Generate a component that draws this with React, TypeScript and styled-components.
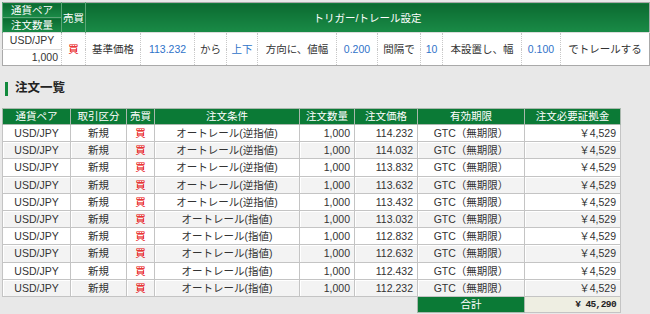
import { createGlobalStyle } from "styled-components";
import styled from "styled-components";

const GlobalStyle = createGlobalStyle`
  html, body {
    margin: 0;
    padding: 0;
    background: #e8e8e8;
  }
  body {
    font-family: "Liberation Sans", "Noto Sans CJK JP", sans-serif;
    font-size: 10.5px;
    color: #333;
  }
`;

const Page = styled.div`
  padding: 2px 0 0 2px;
  width: 648px;
`;

const TriggerTable = styled.table`
  width: 647px;
  table-layout: fixed;
  border-collapse: collapse;
  border: 1px solid #a9a9a9;
  background: #fff;
`;

const GreenHead = styled.th<{ $split?: boolean }>`
  background: linear-gradient(#0b6a30, #1a8b47);
  color: #fff;
  font-weight: normal;
  height: 14px;
  padding: 0;
  border-left: 1px solid #5aa676;
  border-bottom: ${(p) => (p.$split ? "1px solid #5aa676" : "none")};
  text-align: center;
  line-height: 14px;
  white-space: nowrap;
`;

const TriggerCell = styled.td<{ $blue?: boolean; $red?: boolean; $align?: string }>`
  height: 15.5px;
  padding: 0 3px;
  text-align: ${(p) => p.$align || "center"};
  color: ${(p) => (p.$red ? "#e60000" : p.$blue ? "#2f73c9" : "#333")};
  border-left: 1px dotted #c8c8c8;
  border-top: 1px solid #dcdcdc;
  white-space: nowrap;
  line-height: 15px;
`;

const SectionTitle = styled.h2`
  display: flex;
  align-items: center;
  gap: 7px;
  margin: 15px 0 12px 3px;
  font-size: 12.5px;
  font-weight: bold;
  color: #222;
  line-height: 15px;

  &::before {
    content: "";
    width: 3px;
    height: 14px;
    background: #138a3e;
  }
`;

const OrderTable = styled.table`
  width: 619px;
  table-layout: fixed;
  border-collapse: collapse;
`;

const OrderHead = styled.th`
  background: #0b7a36;
  color: #fff;
  font-weight: normal;
  height: 15px;
  padding: 0;
  border: 1px solid #a9b8ad;
  line-height: 15px;
  text-align: center;
  white-space: nowrap;
`;

const OrderRow = styled.tr<{ $odd: boolean }>`
  background: ${(p) => (p.$odd ? "#fff" : "#f3f3f3")};
`;

const OrderCell = styled.td<{ $align?: string; $red?: boolean }>`
  height: 16.2px;
  padding: 0 4px;
  border: 1px solid #c4c4c4;
  box-shadow: inset 1px 1px 0 #fff;
  text-align: ${(p) => p.$align || "center"};
  color: ${(p) => (p.$red ? "#e60000" : "#333")};
  white-space: nowrap;
  line-height: 16px;
`;

const BlankCell = styled.td`
  border: none;
  background: #e8e8e8;
`;

const TotalLabel = styled.td`
  background: #0b7a36;
  color: #fff;
  text-align: center;
  height: 15px;
  border: 1px solid #a9b8ad;
  line-height: 15px;
  padding: 0;
`;

const TotalValue = styled.td`
  background: #eeeee2;
  border: 1px solid #c4c4c4;
  text-align: right;
  padding: 0 4px;
  font-family: "Liberation Mono", "DejaVu Sans Mono", monospace;
  font-weight: bold;
  font-size: 9.5px;
  letter-spacing: -0.6px;
  color: #222;
`;

const triggerCols = [59, 24, 55, 54, 32, 31, 79, 41, 43, 22, 79, 39, 89];
const orderCols = [68, 56, 28, 145, 55, 63, 107, 96];

const orders = [
  { kind: "オートレール(逆指値)", price: "114.232" },
  { kind: "オートレール(逆指値)", price: "114.032" },
  { kind: "オートレール(逆指値)", price: "113.832" },
  { kind: "オートレール(逆指値)", price: "113.632" },
  { kind: "オートレール(逆指値)", price: "113.432" },
  { kind: "オートレール(指値)", price: "113.032" },
  { kind: "オートレール(指値)", price: "112.832" },
  { kind: "オートレール(指値)", price: "112.632" },
  { kind: "オートレール(指値)", price: "112.432" },
  { kind: "オートレール(指値)", price: "112.232" },
];

const App = () => {
  return (
    <>
      <GlobalStyle />
      <Page>
        <TriggerTable>
          <colgroup>
            {triggerCols.map((w, i) => (
              <col key={i} style={{ width: w }} />
            ))}
          </colgroup>
          <thead>
            <tr>
              <GreenHead $split>通貨ペア</GreenHead>
              <GreenHead rowSpan={2}>売買</GreenHead>
              <GreenHead rowSpan={2} colSpan={11}>
                トリガー/トレール設定
              </GreenHead>
            </tr>
            <tr>
              <GreenHead>注文数量</GreenHead>
            </tr>
          </thead>
          <tbody>
            <tr>
              <TriggerCell>USD/JPY</TriggerCell>
              <TriggerCell rowSpan={2} $red>
                買
              </TriggerCell>
              <TriggerCell rowSpan={2}>基準価格</TriggerCell>
              <TriggerCell rowSpan={2} $blue>
                113.232
              </TriggerCell>
              <TriggerCell rowSpan={2}>から</TriggerCell>
              <TriggerCell rowSpan={2} $blue>
                上下
              </TriggerCell>
              <TriggerCell rowSpan={2}>方向に、値幅</TriggerCell>
              <TriggerCell rowSpan={2} $blue>
                0.200
              </TriggerCell>
              <TriggerCell rowSpan={2}>間隔で</TriggerCell>
              <TriggerCell rowSpan={2} $blue>
                10
              </TriggerCell>
              <TriggerCell rowSpan={2}>本設置し、幅</TriggerCell>
              <TriggerCell rowSpan={2} $blue>
                0.100
              </TriggerCell>
              <TriggerCell rowSpan={2}>でトレールする</TriggerCell>
            </tr>
            <tr>
              <TriggerCell $align="right">1,000</TriggerCell>
            </tr>
          </tbody>
        </TriggerTable>

        <SectionTitle>注文一覧</SectionTitle>

        <OrderTable>
          <colgroup>
            {orderCols.map((w, i) => (
              <col key={i} style={{ width: w }} />
            ))}
          </colgroup>
          <thead>
            <tr>
              <OrderHead>通貨ペア</OrderHead>
              <OrderHead>取引区分</OrderHead>
              <OrderHead>売買</OrderHead>
              <OrderHead>注文条件</OrderHead>
              <OrderHead>注文数量</OrderHead>
              <OrderHead>注文価格</OrderHead>
              <OrderHead>有効期限</OrderHead>
              <OrderHead>注文必要証拠金</OrderHead>
            </tr>
          </thead>
          <tbody>
            {orders.map((o, i) => (
              <OrderRow key={i} $odd={i % 2 === 0}>
                <OrderCell>USD/JPY</OrderCell>
                <OrderCell>新規</OrderCell>
                <OrderCell $red>買</OrderCell>
                <OrderCell>{o.kind}</OrderCell>
                <OrderCell $align="right">1,000</OrderCell>
                <OrderCell $align="right">{o.price}</OrderCell>
                <OrderCell>GTC（無期限）</OrderCell>
                <OrderCell $align="right">￥4,529</OrderCell>
              </OrderRow>
            ))}
            <tr>
              <BlankCell colSpan={6} />
              <TotalLabel>合計</TotalLabel>
              <TotalValue>¥ 45,290</TotalValue>
            </tr>
          </tbody>
        </OrderTable>
      </Page>
    </>
  );
};

export default App;
